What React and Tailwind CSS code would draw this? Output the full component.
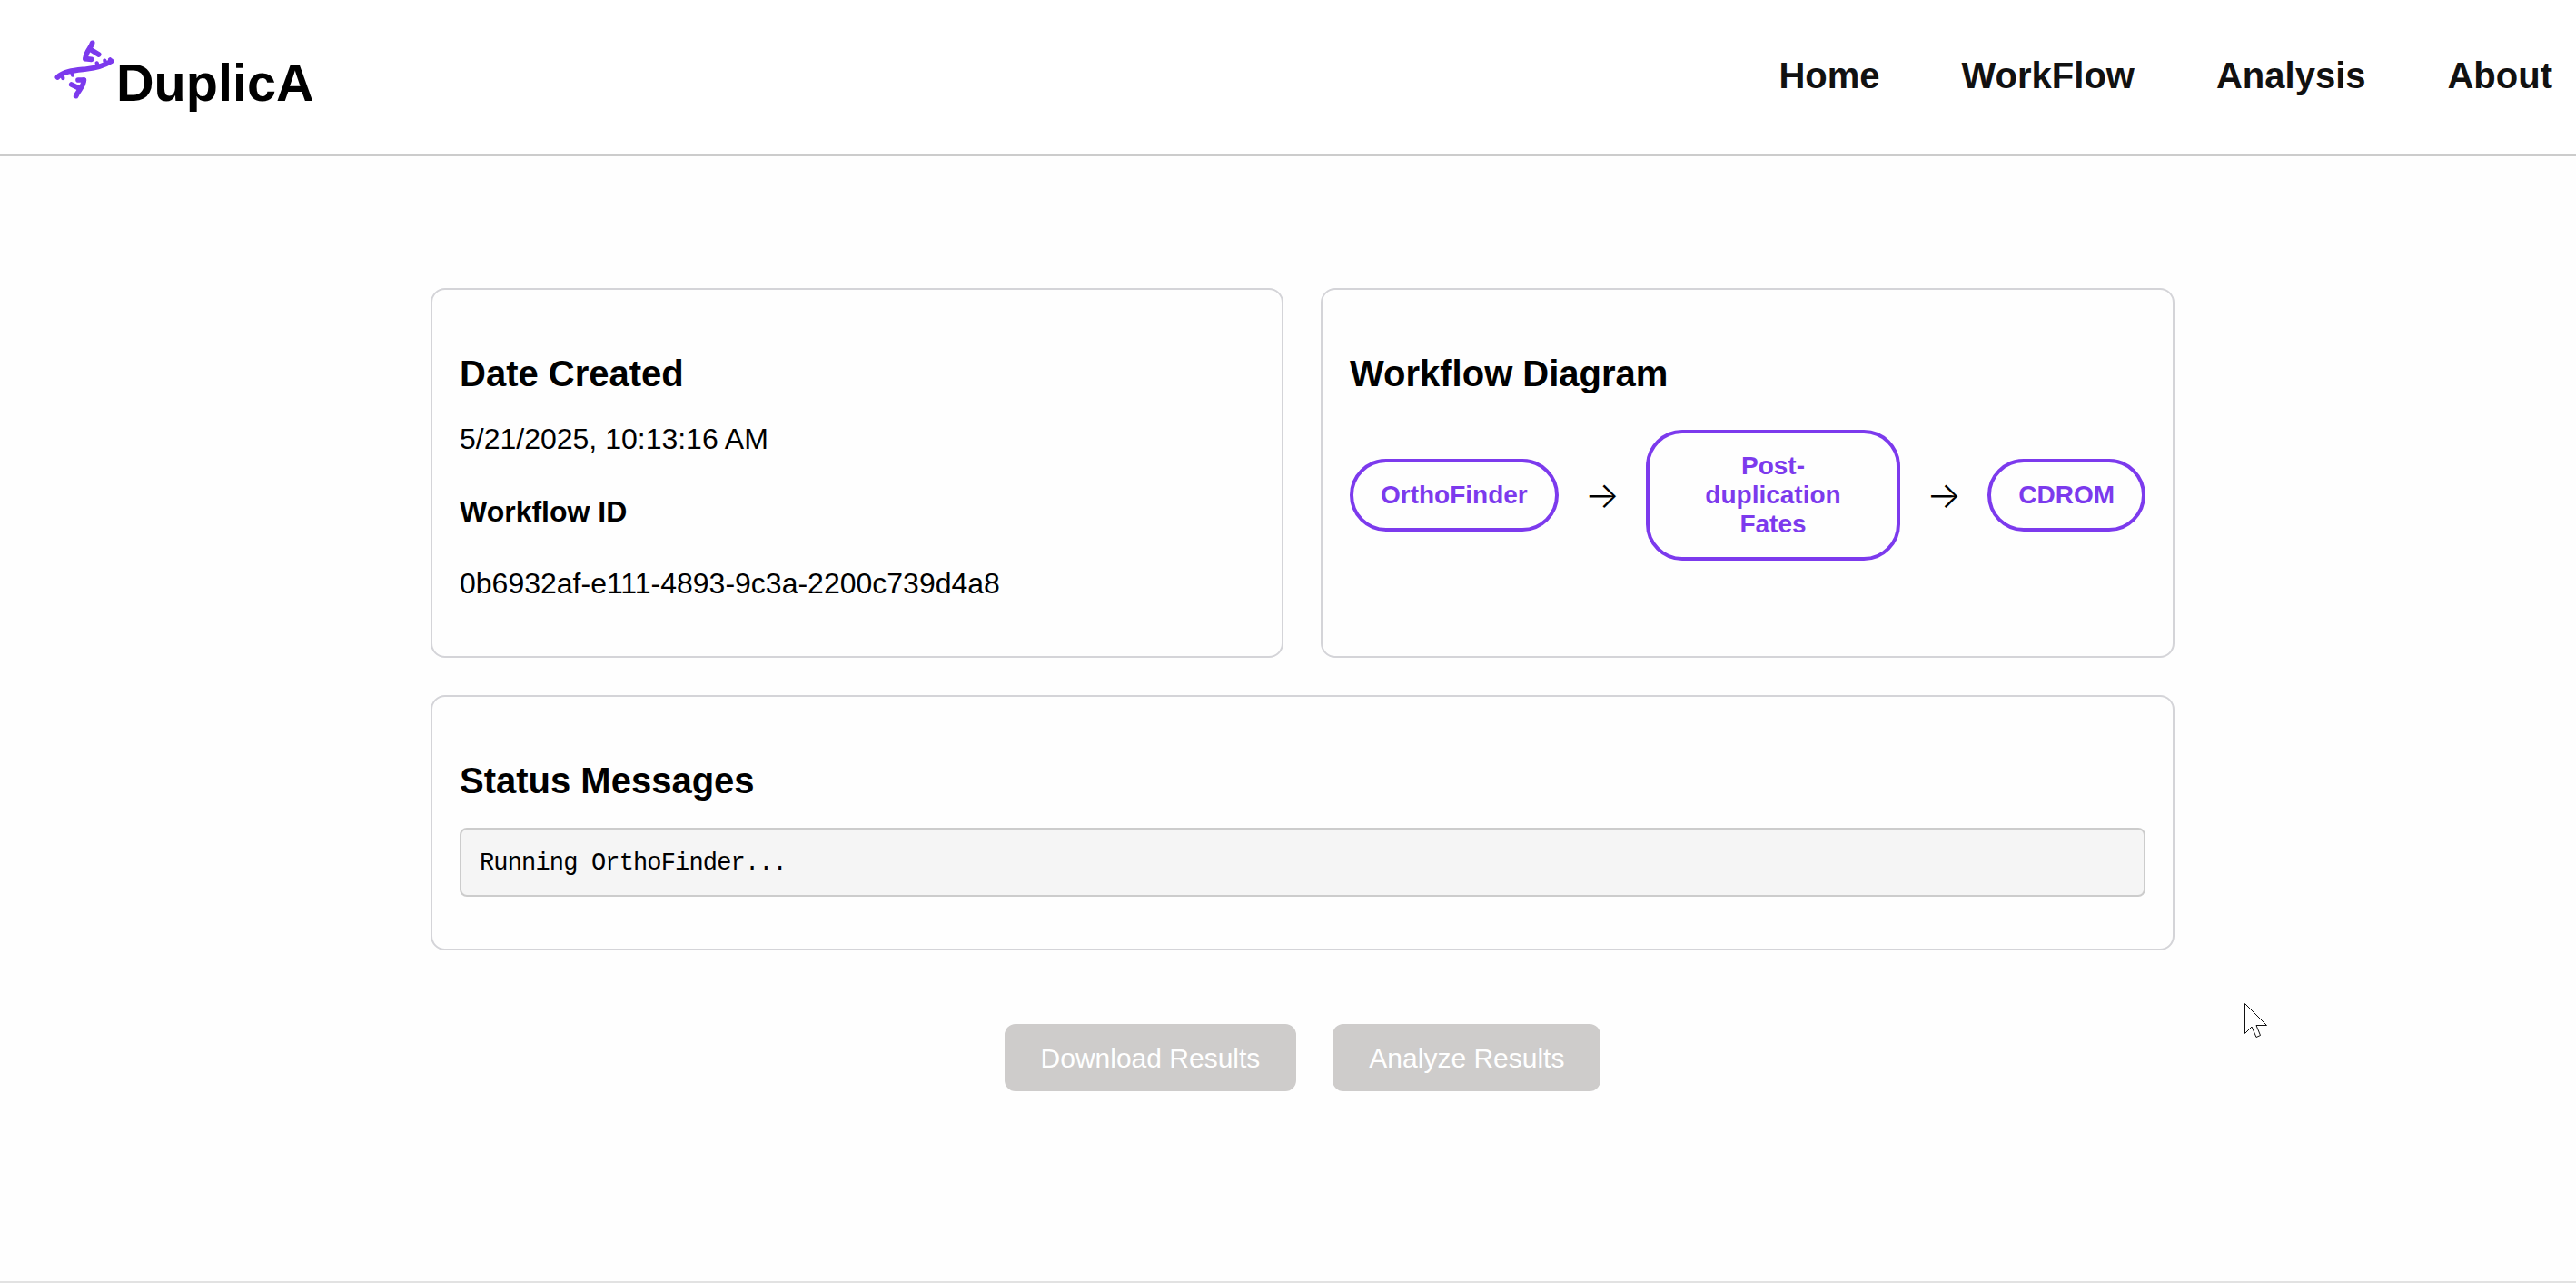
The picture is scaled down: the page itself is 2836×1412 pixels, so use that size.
import React from 'react';

function Logo() {
    return (
        <svg width="68" height="68" viewBox="30 25 204 204" fill="none" stroke="#7c3aed" strokeLinecap="round" strokeLinejoin="round" className="mb-[28px] shrink-0">
            <g strokeWidth="17">
                <path d="M40 151 C 60 130, 100 128, 135 124 C 170 120, 195 112, 218 98" />
                <path d="M155 38 C 150 55, 134 65, 132 89" />
                <path d="M150 60 L 176 76" />
                <path d="M132 90 L 152 92" />
                <path d="M127 160 C 128 180, 108 195, 101 213" />
                <path d="M112 188 L 86 175" />
                <path d="M127 160 L 108 160" />
            </g>
            <g strokeWidth="13">
                <path d="M56 146 L 58 154" />
                <path d="M88 134 L 90 144" />
                <path d="M170 104 L 172 112" />
                <path d="M196 96 L 198 102" />
                <path d="M213 92 L 215 96" />
            </g>
        </svg>
    );
}

function Cursor() {
    return (
        <svg width="26" height="40" viewBox="0 0 26 40" className="absolute left-[2471px] top-[1104px]">
            <path d="M0.5 0.5 L0.5 33.5 L8 26 L13 37.5 L17.5 35.5 L13 24.5 L24.5 24.5 Z" fill="#fff" stroke="#111" strokeWidth="1" />
        </svg>
    );
}

function Card({ title, children, className }) {
    return (
        <div className={"border-2 border-[#d4d4d8] rounded-[16px] bg-[#fefefe] px-[30px] pt-[30px] pb-[30px] " + className}>
            <h3 className="mt-[32px] text-[40px] leading-[60px] font-bold text-black">{title}</h3>
            {children}
        </div>
    );
}

function Node({ children, className }) {
    return (
        <div className={"border-4 border-[#7c3aed] rounded-[40px] py-[20px] text-center text-[28px] leading-[32px] font-bold text-[#7c3aed] " + className}>
            {children}
        </div>
    );
}

function Arrow() {
    return <span className="font-['Inter',sans-serif] font-light text-[40px] leading-[48px] text-black">→</span>;
}

export default function App() {
    return (
        <div className="relative h-[1412px] overflow-hidden flex flex-col bg-[#fefefe] font-['Liberation_Sans',Arial,sans-serif]">
            <header className="h-[172px] shrink-0 flex items-center justify-between border-b-2 border-[#cccccc] bg-white pl-[60px] pr-[26px]">
                <div className="flex items-center mt-[11px]">
                    <Logo />
                    <span className="text-[57.6px] leading-[64px] font-bold text-black">DuplicA</span>
                </div>
                <nav className="flex gap-[90px] mb-[4px] text-[40px] leading-[48px] font-bold text-[#111111]">
                    <a>Home</a>
                    <a>WorkFlow</a>
                    <a>Analysis</a>
                    <a>About</a>
                </nav>
            </header>

            <main className="flex-1 ml-[474px] w-[1920px] pt-[145px]">
                <div className="grid grid-cols-[939px_1fr] gap-[41px]">
                    <Card title="Date Created">
                        <p className="mt-[18px] text-[32px] leading-[48px] text-black">5/21/2025, 10:13:16 AM</p>
                        <p className="mt-[32px] text-[32px] leading-[48px] font-bold text-black">Workflow ID</p>
                        <p className="mt-[31px] mb-[26px] text-[32px] leading-[48px] text-black">0b6932af-e111-4893-9c3a-2200c739d4a8</p>
                    </Card>
                    <Card title="Workflow Diagram">
                        <div className="mt-[32px] flex items-center justify-between">
                            <Node className="px-[30px]">OrthoFinder</Node>
                            <Arrow />
                            <Node className="w-[280px] px-[30px]">Post-duplication Fates</Node>
                            <Arrow />
                            <Node className="px-[30px]">CDROM</Node>
                        </div>
                    </Card>
                </div>

                <Card title="Status Messages" className="mt-[41px]">
                    <div className="mt-[22px] mb-[27px] h-[76px] pt-[3px] flex items-center border-2 border-[#cccccc] rounded-[8px] bg-[#f5f5f5] px-[20px] font-['Liberation_Mono',monospace] text-[27px] tracking-[-0.84px] text-black">
                        Running OrthoFinder...
                    </div>
                </Card>

                <div className="mt-[81px] flex justify-center gap-[40px]">
                    <button className="h-[74px] px-[40px] rounded-[12px] bg-[#cecccb] text-[30px] text-white">Download Results</button>
                    <button className="h-[74px] px-[40px] rounded-[12px] bg-[#cecccb] text-[30px] text-white">Analyze Results</button>
                </div>
            </main>

            <footer className="h-[2px] shrink-0 bg-[#e2e2e2]" />
            <Cursor />
        </div>
    );
}
